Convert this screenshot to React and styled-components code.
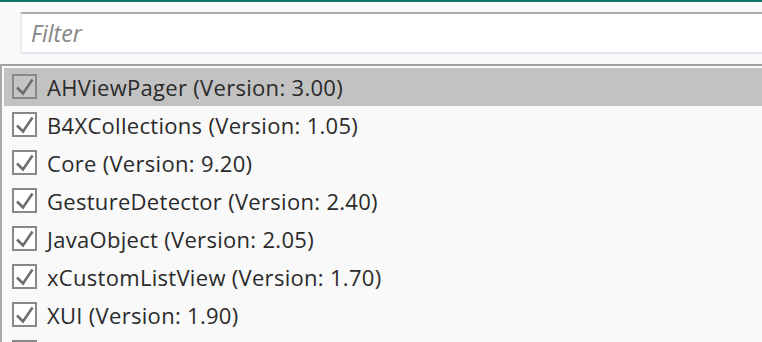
import React, { useState } from "react";
import styled, { createGlobalStyle } from "styled-components";

const GlobalStyle = createGlobalStyle`
  html, body {
    margin: 0;
    padding: 0;
    background: #f9f9f9;
    font-family: "Open Sans", "Noto Sans", sans-serif;
  }
`;

const Page = styled.div`
  width: 762px;
  height: 342px;
  overflow: hidden;
  background: #f9f9f9;
  border-top: 2px solid #107868;
  box-sizing: border-box;
  display: flex;
  flex-direction: column;
`;

const FilterWrap = styled.div`
  padding: 10px 0 10px 20px;
`;

const FilterInput = styled.input`
  display: block;
  width: 100%;
  height: 42px;
  box-sizing: border-box;
  border: none;
  border-top: 2px solid #aaaaaa;
  border-left: 2px solid #e8ebf0;
  border-bottom: 2px solid #e3e8f0;
  background: #ffffff;
  padding: 0 0 0 9px;
  font-family: "Open Sans", sans-serif;
  font-size: 23px;
  color: #333;
  outline: none;

  &::placeholder {
    color: #858585;
    font-style: italic;
  }
`;

const List = styled.div`
  flex: 1;
  border-top: 2px solid #a0a0a0;
  border-left: 2px solid #a8a8a8;
  background: #f9f9f9;
  padding: 2px 0 0 2px;
`;

const Row = styled.label`
  display: flex;
  align-items: center;
  height: 38px;
  padding-left: 8px;
  background: ${(p) => (p.$selected ? "#c2c2c2" : "transparent")};
  cursor: default;
`;

const Box = styled.span`
  width: 25px;
  height: 25px;
  margin-top: -2px;
  box-sizing: border-box;
  border: 2px solid #888888;
  background: ${(p) => (p.$selected ? "#c4c4c4" : "#ffffff")};
  display: flex;
  align-items: center;
  justify-content: center;
  flex-shrink: 0;
`;

const Label = styled.span`
  margin-left: 10px;
  font-size: 22px;
  letter-spacing: 0.3px;
  color: #2a2a2a;
  white-space: nowrap;
`;

const Check = () => (
  <svg width="21" height="21" viewBox="0 0 21 21">
    <path
      d="M3 11.5 L9 17.5 L18.5 3.5"
      fill="none"
      stroke="#6e6e6e"
      strokeWidth="2.6"
      strokeLinejoin="miter"
    />
  </svg>
);

const libs = [
  { name: "AHViewPager", version: "3.00" },
  { name: "B4XCollections", version: "1.05" },
  { name: "Core", version: "9.20" },
  { name: "GestureDetector", version: "2.40" },
  { name: "JavaObject", version: "2.05" },
  { name: "xCustomListView", version: "1.70" },
  { name: "XUI", version: "1.90" },
  { name: "", version: "" },
];

export default function App() {
  const [selected, setSelected] = useState(0);

  return (
    <>
      <GlobalStyle />
      <Page>
        <FilterWrap>
          <FilterInput placeholder="Filter" />
        </FilterWrap>
        <List>
          {libs.map((lib, i) => (
            <Row key={i} $selected={i === selected} onClick={() => setSelected(i)}>
              <Box $selected={i === selected}>{lib.name && <Check />}</Box>
              {lib.name && (
                <Label>
                  {lib.name} (Version: {lib.version})
                </Label>
              )}
            </Row>
          ))}
        </List>
      </Page>
    </>
  );
}
